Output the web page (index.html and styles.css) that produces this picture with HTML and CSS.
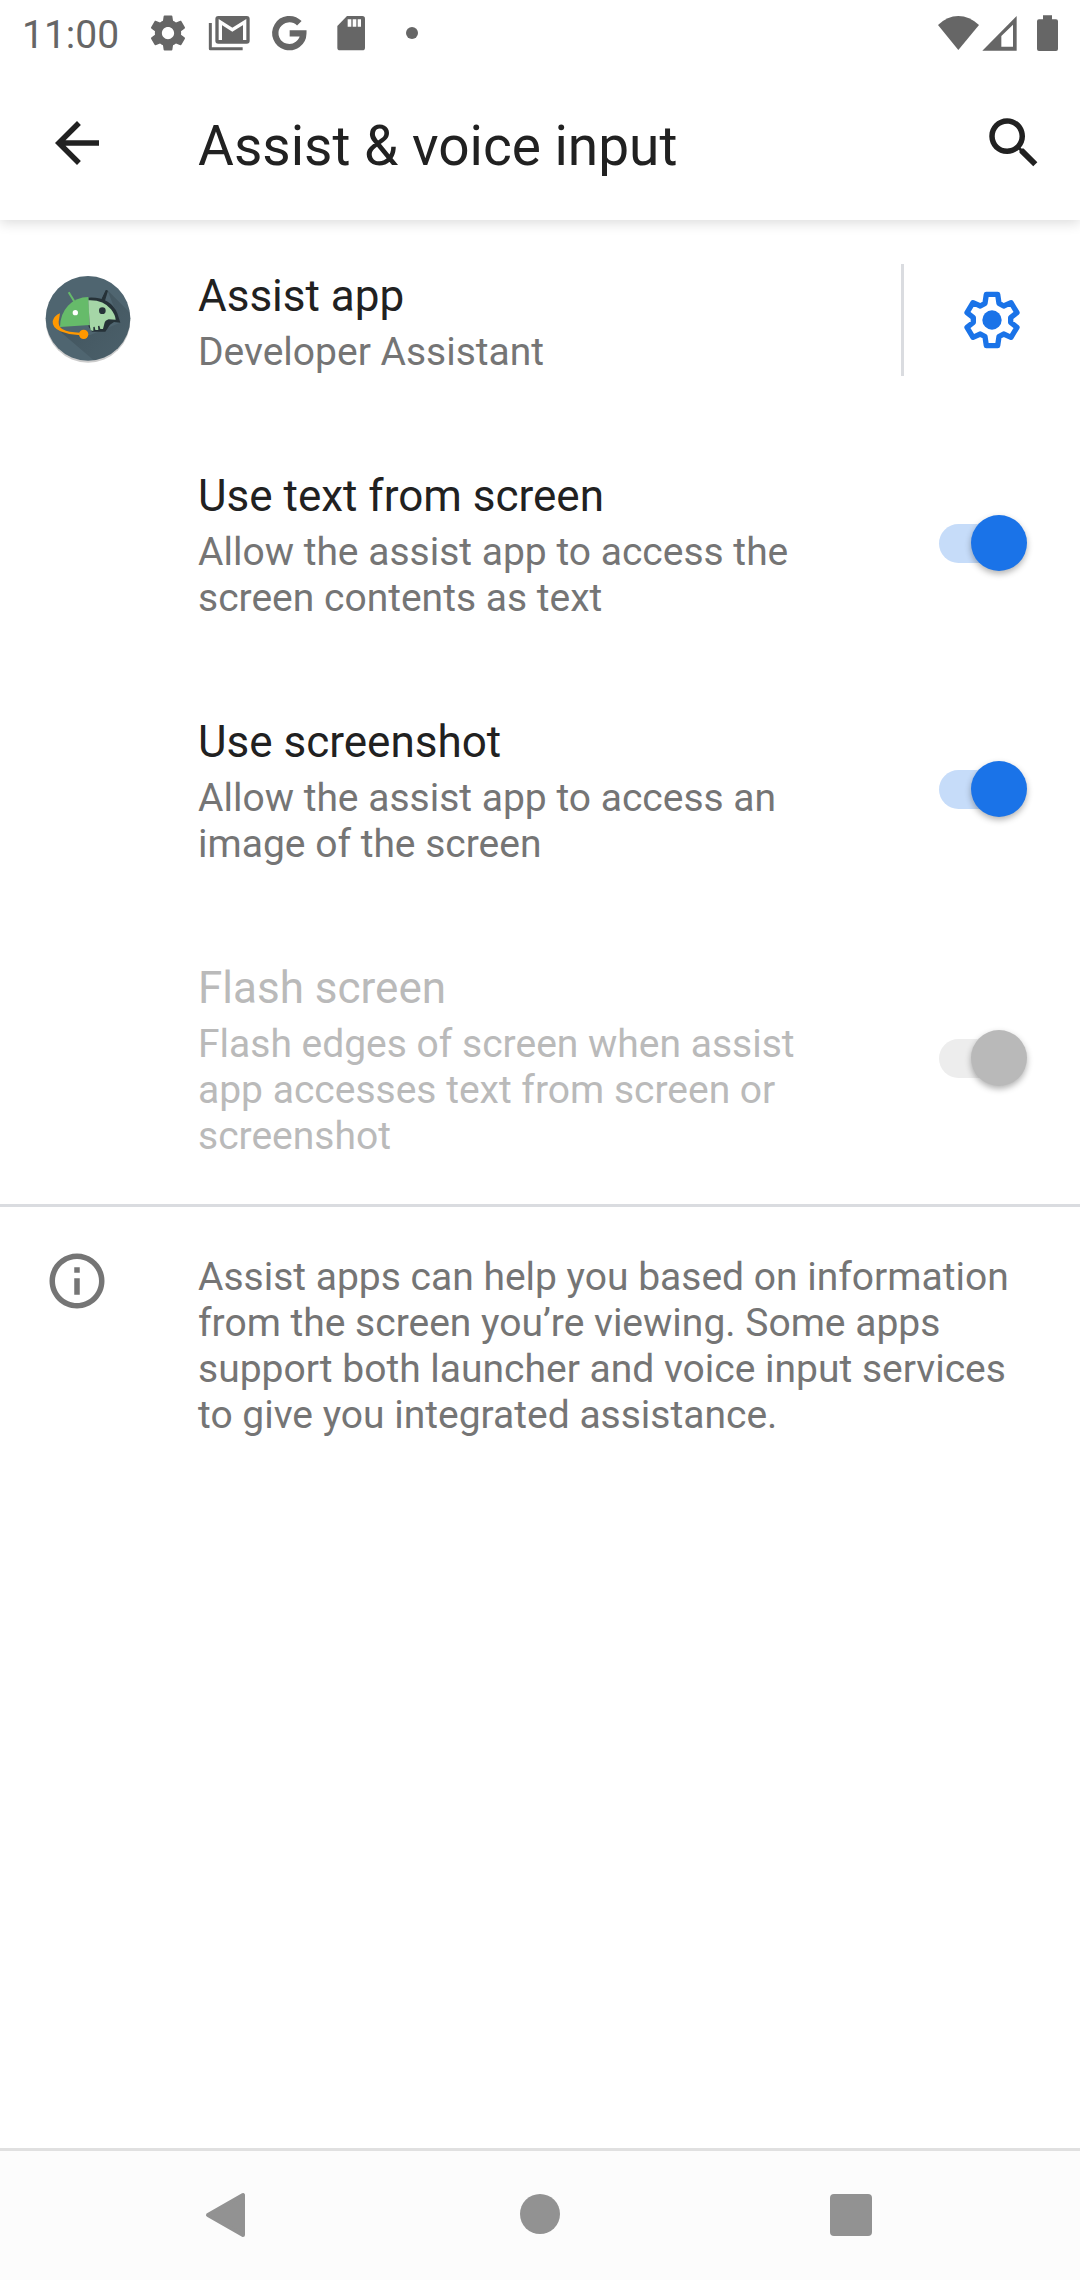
FILE: index.html
```html
<!DOCTYPE html>
<html lang="en">
<head>
<meta charset="utf-8">
<meta name="viewport" content="width=device-width, initial-scale=1">
<title>Assist &amp; voice input</title>
<link rel="stylesheet" href="styles.css">
</head>
<body>
<div class="status-bar">
  <span class="clock">11:00</span>
  <div class="notifications">
    <svg class="notice" viewBox="0 0 24 24" aria-hidden="true"><path fill="currentColor" d="M19.43 12.98c.04-.32.07-.64.07-.98s-.03-.66-.07-.98l2.11-1.65c.19-.15.24-.42.12-.64l-2-3.46c-.12-.22-.39-.3-.61-.22l-2.49 1c-.52-.4-1.08-.73-1.69-.98l-.38-2.65C14.46 2.18 14.25 2 14 2h-4c-.25 0-.46.18-.49.42l-.38 2.65c-.61.25-1.17.59-1.69.98l-2.49-1c-.23-.09-.49 0-.61.22l-2 3.46c-.13.22-.07.49.12.64l2.11 1.65c-.04.32-.07.65-.07.98s.03.66.07.98l-2.11 1.65c-.19.15-.24.42-.12.64l2 3.46c.12.22.39.3.61.22l2.49-1c.52.4 1.08.73 1.69.98l.38 2.65c.03.24.24.42.49.42h4c.25 0 .46-.18.49-.42l.38-2.65c.61-.25 1.17-.59 1.69-.98l2.49 1c.23.09.49 0 .61-.22l2-3.46c.12-.22.07-.49-.12-.64l-2.11-1.65zM12 15.5c-1.93 0-3.5-1.57-3.5-3.5s1.57-3.5 3.5-3.5 3.5 1.57 3.5 3.5-1.57 3.5-3.5 3.5z"/></svg>
    <svg class="notice" viewBox="625 36 126 126" aria-hidden="true"><path fill="none" stroke="currentColor" stroke-width="9" stroke-linejoin="round" d="M632 69V146H729"/><rect x="647" y="48" width="103" height="83" rx="9" fill="currentColor"/><path fill="none" stroke="#fff" stroke-width="10" d="M662 120V66L698 89L735 66V120"/></svg>
    <svg class="notice" viewBox="808 36 126 126" aria-hidden="true"><path fill="none" stroke="currentColor" stroke-width="19" d="M899 70A42 42 0 1 0 911 100H870"/></svg>
    <svg class="notice" viewBox="991 36 126 126" aria-hidden="true"><path fill="currentColor" d="M1042 48H1088q8 0 8 8V143q0 8-8 8H1021q-8 0-8-8V78Z"/><path fill="#fff" d="M1044 58h11v22h-11zM1059 58h11v22h-11zM1074 58h10v22h-10z"/></svg>
    <svg class="notice" viewBox="1174 36 126 126" aria-hidden="true"><circle cx="1237" cy="99" r="18" fill="currentColor"/></svg>
  </div>
  <div class="system">
    <svg width="41" height="36" viewBox="114 43 123 108" aria-hidden="true"><path fill="currentColor" d="M175 148L114 73Q142 46 175 46T237 73Z"/></svg>
    <svg width="35" height="36" viewBox="246 43 105 108" aria-hidden="true"><path fill="currentColor" fill-rule="evenodd" d="M247 150L350 46V150ZM304 138H339V72L304 106Z"/></svg>
    <svg class="battery" width="21" height="36" viewBox="411 44 63 108" aria-hidden="true"><path fill="currentColor" d="M429 45h27v12h12q6 0 6 6v83q0 6-6 6h-51q-6 0-6-6V63q0-6 6-6h12z"/></svg>
  </div>
</div>

<header class="app-bar">
  <button class="icon-button" type="button" aria-label="Navigate up">
    <svg class="icon" viewBox="0 0 24 24" aria-hidden="true"><path fill="currentColor" d="M20 11H7.83l5.59-5.59L12 4l-8 8 8 8 1.41-1.41L7.83 13H20z"/></svg>
  </button>
  <h1 class="page-title">Assist &amp; voice input</h1>
  <button class="icon-button" type="button" aria-label="Search settings">
    <svg class="icon" viewBox="0 0 24 24" aria-hidden="true"><path fill="currentColor" d="M15.5 14h-.79l-.28-.27C15.41 12.59 16 11.11 16 9.5 16 5.91 13.09 3 9.5 3S3 5.91 3 9.5 5.91 16 9.5 16c1.61 0 3.09-.59 4.23-1.57l.27.28v.79l5 4.99L20.49 19l-4.99-5zm-6 0C7.01 14 5 11.99 5 9.5S7.01 5 9.5 5 14 7.01 14 9.5 11.99 14 9.5 14z"/></svg>
  </button>
</header>

<main class="content">
  <section class="row row-app">
    <svg class="app-icon" viewBox="42 48 264 264" aria-hidden="true">
      <defs>
        <clipPath id="disc"><circle cx="174" cy="175" r="127"/></clipPath>
        <linearGradient id="cast" x1="0" y1="0" x2="1" y2="1"><stop offset="0" stop-color="#263238" stop-opacity=".4"/><stop offset="1" stop-color="#37474f" stop-opacity=".1"/></linearGradient>
      </defs>
      <circle cx="174" cy="181" r="127" fill="#000" opacity=".2"/>
      <g clip-path="url(#disc)">
        <rect x="42" y="48" width="264" height="264" fill="#4f6570"/>
        <path fill="url(#cast)" d="M232 90L330 188V360H260L85 210L180 225L270 188Z"/>
      </g>
      <path fill="#263238" d="M176 113Q240 110 262 160L271 188L252 186L240 194L226 215H186L176 200ZM215 118L228 90L234 92L224 125Z"/>
      <path fill="none" stroke="#66bb6a" stroke-width="6" d="M116 97L134 126"/>
      <path fill="none" stroke="#263238" stroke-width="5" d="M230 91L217 118"/>
      <path fill="#66bb6a" d="M175 111Q139 111 114 137Q90 163 90 201L179 195Z"/>
      <path fill="#a5d6a7" d="M175 121Q220 119 243 148Q256 165 257 179L236 178Q225 181 223 191L219 207H211L208 197L204 198L205 210H196L194 200L190 201V213L182 211L179 195Z"/>
      <circle cx="136" cy="158" r="8" fill="#fff"/><circle cx="217" cy="152" r="10" fill="#263238"/>
      <path fill="#ff9800" d="M90 160Q73 166 68 183Q66 202 91 214Q120 226 149 225V218Q116 218 98 208Q85 200 86 185Z"/><circle cx="161" cy="223" r="14" fill="#ff9800"/>
    </svg>
    <div class="text">
      <h2 class="title">Assist app</h2>
      <p class="summary">Developer Assistant</p>
    </div>
    <button class="settings-button" type="button" aria-label="Assist app settings">
      <svg class="icon" viewBox="237 111 198 198" aria-hidden="true"><path fill="none" stroke="currentColor" stroke-width="16" stroke-linejoin="round" d="M319 133H353L357 160L371 168L393 158L411 188L392 203V217L411 232L393 262L371 252L357 260L353 287H319L315 260L301 252L279 262L261 232L280 217V203L261 188L279 158L301 168L315 160Z"/><circle cx="336" cy="210" r="29" fill="currentColor"/></svg>
    </button>
  </section>

  <label class="row" for="use-text">
    <span class="text">
      <span class="title">Use text from screen</span>
      <span class="summary">Allow the assist app to access the screen contents as text</span>
    </span>
    <input class="switch" id="use-text" type="checkbox" role="switch" checked>
  </label>

  <label class="row" for="use-screenshot">
    <span class="text">
      <span class="title">Use screenshot</span>
      <span class="summary">Allow the assist app to access an image of the screen</span>
    </span>
    <input class="switch" id="use-screenshot" type="checkbox" role="switch" checked>
  </label>

  <label class="row row-disabled" for="flash-screen">
    <span class="text">
      <span class="title">Flash screen</span>
      <span class="summary">Flash edges of screen when assist app accesses text from screen or screenshot</span>
    </span>
    <input class="switch" id="flash-screen" type="checkbox" role="switch" checked disabled>
  </label>

  <section class="note">
    <svg class="icon" viewBox="0 0 24 24" aria-hidden="true"><path fill="currentColor" d="M11 7h2v2h-2zm0 4h2v6h-2zm1-9C6.48 2 2 6.48 2 12s4.48 10 10 10 10-4.48 10-10S17.52 2 12 2zm0 18c-4.41 0-8-3.59-8-8s3.59-8 8-8 8 3.59 8 8-3.59 8-8 8z"/></svg>
    <p class="summary">Assist apps can help you based on information from the screen you’re viewing. Some apps support both launcher and voice input services to give you integrated assistance.</p>
  </section>
</main>

<nav class="nav-bar">
  <button class="nav-button" type="button" aria-label="Back"><svg class="nav-icon" viewBox="0 0 48 48" aria-hidden="true"><path fill="currentColor" stroke="currentColor" stroke-width="4" stroke-linejoin="round" d="M3 24L38 4V44Z"/></svg></button>
  <button class="nav-button" type="button" aria-label="Home"><svg class="nav-icon" viewBox="0 0 48 48" aria-hidden="true"><circle cx="24" cy="23" r="20" fill="currentColor"/></svg></button>
  <button class="nav-button" type="button" aria-label="Recent apps"><svg class="nav-icon" viewBox="0 0 48 48" aria-hidden="true"><rect x="3" y="3" width="42" height="42" rx="4" fill="currentColor"/></svg></button>
</nav>
</body>
</html>
```

FILE: styles.css
```css
* {
  box-sizing: border-box;
}

body {
  margin: 0;
  min-height: 100vh;
  display: flex;
  flex-direction: column;
  background: #fff;
  color: #212121;
  font-family: Roboto, "Liberation Sans", sans-serif;
}

button {
  display: flex;
  align-items: center;
  justify-content: center;
  padding: 0;
  border: 0;
  background: none;
  color: inherit;
}

svg {
  display: block;
  flex: none;
}

.icon {
  width: 66px;
  height: 66px;
}

/* Status bar */
.status-bar {
  position: relative;
  z-index: 1;
  display: flex;
  align-items: center;
  height: 66px;
  padding: 0 22px;
  background: #fff;
  color: #666;
}

.clock {
  margin-right: 28px;
  padding-top: 3px;
  font-size: 39px;
  line-height: 46px;
}

.notifications {
  display: flex;
  gap: 19px;
}

.notice {
  width: 42px;
  height: 42px;
}

.system {
  display: flex;
  gap: 3px;
  margin-left: auto;
}

.battery {
  margin-left: 17px;
}

/* App bar */
.app-bar {
  position: relative;
  display: flex;
  align-items: center;
  height: 154px;
  padding: 0 33px 0 44px;
  background: #fff;
  box-shadow: 0 3px 12px rgba(0, 0, 0, .14);
}

.page-title {
  flex: 1;
  margin: 0 0 0 88px;
  padding-top: 6px;
  font-size: 55px;
  font-weight: 400;
  line-height: 64px;
}

/* Preference rows */
.content {
  flex: 1;
}

.row {
  display: flex;
  align-items: center;
  padding: 0 53px 0 198px;
}

.row-app {
  padding: 0 0 0 44px;
}

.app-icon {
  width: 88px;
  height: 88px;
  margin-right: 66px;
}

.text {
  flex: 1;
  padding: 50px 0 45px;
  margin-right: 88px;
}

.row-app .text {
  margin-right: 0;
}

.title {
  display: block;
  margin: 0 0 7px;
  font-size: 44px;
  font-weight: 400;
  line-height: 52px;
}

.summary {
  display: block;
  margin: 0;
  color: #757575;
  font-size: 39px;
  line-height: 46px;
}

.row-disabled .title,
.row-disabled .summary {
  color: #bababa;
}

.settings-button {
  width: 179px;
  height: 112px;
  border-left: 3px solid #dadce0;
  color: #1a73e8;
}

/* Switches */
.switch {
  appearance: none;
  display: grid;
  align-items: center;
  width: 88px;
  height: 56px;
  margin: 0;
  color: #1a73e8;
}

.switch::before,
.switch::after {
  content: "";
  grid-area: 1 / 1;
}

.switch::before {
  width: 80px;
  height: 39px;
  border-radius: 20px;
  background: #c6dcf9;
}

.switch::after {
  width: 56px;
  height: 56px;
  border-radius: 50%;
  background: currentColor;
  box-shadow: 0 3px 6px rgba(0, 0, 0, .3);
}

.switch:checked::after {
  justify-self: end;
}

.switch:disabled {
  color: #b9b9b9;
}

.switch:disabled::before {
  background: #ededed;
}

/* Footer note */
.note {
  display: flex;
  gap: 88px;
  padding: 41px 44px 44px;
  border-top: 3px solid #dadce0;
  color: #757575;
}

.note .summary {
  padding-top: 6px;
}

/* Navigation bar */
.nav-bar {
  display: flex;
  height: 132px;
  padding: 0 74px 2px;
  border-top: 3px solid #e0e0e0;
  background: #fcfcfc;
  color: #929292;
}

.nav-button {
  flex: 1;
}

.nav-icon {
  width: 48px;
  height: 48px;
}
```
